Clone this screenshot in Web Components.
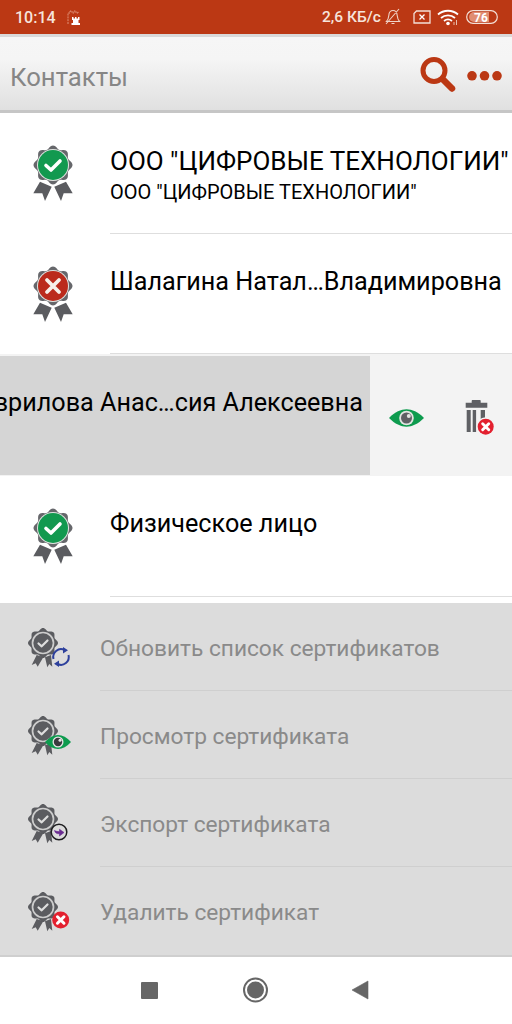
<!DOCTYPE html>
<html lang="ru">
<head>
<meta charset="utf-8">
<title>Контакты</title>
<style>
  html, body { margin: 0; padding: 0; background: #fff; }
  body { width: 512px; height: 1024px; overflow: hidden; font-family: Roboto, sans-serif; }
</style>
</head>
<body>
<status-bar></status-bar>
<app-toolbar>Контакты</app-toolbar>
<contact-list>
  <contact-row status="ok" subtitle='ООО "ЦИФРОВЫЕ ТЕХНОЛОГИИ"'>ООО "ЦИФРОВЫЕ ТЕХНОЛОГИИ"</contact-row>
  <contact-row status="bad">Шалагина Натал…Владимировна</contact-row>
  <swiped-row>Гаврилова Анас…сия Алексеевна</swiped-row>
  <contact-row status="ok">Физическое лицо</contact-row>
</contact-list>
<action-menu>
  <menu-item overlay="sync">Обновить список сертификатов</menu-item>
  <menu-item overlay="eye">Просмотр сертификата</menu-item>
  <menu-item overlay="export">Экспорт сертификата</menu-item>
  <menu-item overlay="delete" last>Удалить сертификат</menu-item>
</action-menu>
<nav-bar></nav-bar>

<script>
// scalloped edge of the certificate badge
function rosette (cx, cy, r) {
  let d = ''
  for (let i = 0; i < 120; i++) {
    const a = i / 120 * Math.PI * 2
    const rr = r * (0.92 + 0.08 * Math.cos(8 * a))
    const x = cx + rr * Math.sin(a)
    const y = cy - rr * Math.cos(a)
    d += (i ? 'L' : 'M') + x.toFixed(2) + ' ' + y.toFixed(2)
  }
  return d + 'Z'
}

const redCross = (cx, cy, r) => `
  <circle cx="${cx}" cy="${cy}" r="${r}" fill="#e3202f"/>
  <path d="M${cx - r * .38} ${cy - r * .38}L${cx + r * .38} ${cy + r * .38}M${cx + r * .38} ${cy - r * .38}L${cx - r * .38} ${cy + r * .38}" stroke="#fff" stroke-width="${r * .36}" stroke-linecap="round"/>`

const OVERLAYS = {
  sync: `
    <g fill="none" stroke="#2d409c" stroke-width="2">
      <path d="M35.500 37a7.800 7.800 0 0 1 11-9"/>
      <path d="M50.500 33a7.800 7.800 0 0 1-11 9"/>
    </g>
    <path d="M45 25l5 3.200-5 3.200zM41 38.600l-5 3.200 5 3.200z" fill="#2d409c"/>`,
  eye: `
    <path d="M27 32C31 27.500 35.500 25 40 25S49 27.500 53 32C49 36.500 44.500 39 40 39S31 36.500 27 32Z" fill="#0d9b4e"/>
    <circle cx="40" cy="32" r="5.500" fill="#e6e6e6"/>
    <circle cx="40" cy="32" r="4.200" fill="#3b3b3f"/>
    <circle cx="42" cy="30.300" r="1.500" fill="#e6e6e6"/>`,
  export: `
    <circle cx="41" cy="34" r="7.800" fill="#dcdcdc" stroke="#1d1d1f" stroke-width="1.500"/>
    <path d="M36.500 32.500c.5 2.500 2.500 3.500 5 3.200v2.300l4.500-3.500-4.500-3.200v2.200c-1.800.2-3.400-.1-5-1Z" fill="#6a2c91" stroke="#6a2c91" stroke-width=".6"/>`,
  delete: redCross(42.7, 34, 8.5)
}

class CertBadge extends HTMLElement {
  constructor () {
    super()
    this.shadow = this.attachShadow({ mode: 'open' })
  }

  connectedCallback () {
    this.render()
  }

  render () {
    const overlay = this.getAttribute('overlay')
    const status = this.getAttribute('status')
    if (overlay) {
      this.shadow.innerHTML = `
        <style>
          :host { display: block; width: 58px; height: 50px; }
          svg { display: block; }
        </style>
        <svg width="58" height="50" viewBox="0 0 58 50">
          <path d="M18.700 33L25.300 35.300L19.700 44.700L17.700 41.300L13.700 43Z M27 35.300L33 33L34.300 44.700L31.300 42L29.300 45.300Z" fill="#5b5c60"/>
          <path d="${rosette(25, 21, 15)}" fill="#5b5c60"/>
          <circle cx="25" cy="21" r="10.500" fill="none" stroke="#cdcdcd" stroke-width="1.700"/>
          <path d="M20.500 21.500L23.700 24.300L29.500 18.500" fill="none" stroke="#dedede" stroke-width="2.200" stroke-linecap="round" stroke-linejoin="round"/>
          ${OVERLAYS[overlay]}
        </svg>`
      return
    }
    const ok = status === 'ok'
    this.shadow.innerHTML = `
      <style>
        :host { display: block; width: 60px; height: 60px; }
        svg { display: block; }
      </style>
      <svg width="60" height="60" viewBox="0 0 60 60">
        <path d="M17 38.700L28.700 43.700L22 58L19.300 50.300L10.300 50.300Z M43 38.700L31.300 43.700L38 58L40.700 50.300L49.700 50.300Z" fill="#5b5c60"/>
        <path d="${rosette(30, 22, 19.5)}" fill="#66676b"/>
        <circle cx="30" cy="22" r="16" fill="#dfe3e0"/>
        <circle cx="30" cy="22" r="15" fill="${ok ? '#12994f' : '#bb2b1c'}"/>
        ${ok
          ? '<path d="M23 22.500L28 27L37 18" fill="none" stroke="#fff" stroke-width="3.600" stroke-linecap="round" stroke-linejoin="round"/>'
          : '<path d="M24 16L36 28M36 16L24 28" stroke="#f6efe9" stroke-width="3.800" stroke-linecap="round"/>'}
      </svg>`
  }
}

class StatusBar extends HTMLElement {
  constructor () {
    super()
    this.shadow = this.attachShadow({ mode: 'open' })
  }

  connectedCallback () {
    this.shadow.innerHTML = /*html*/`
      <style>
        :host {
          display: flex;
          align-items: center;
          height: 34px;
          padding: 0 14px 0 15px;
          background: #bb3814;
          color: #f6e4dc;
          font: 500 16px Roboto, sans-serif;
        }
        .time { width: 52px; }
        .net { margin-left: auto; font-size: 15.5px; width: 61px; }
        svg { display: block; flex: none; }
      </style>
      <span class="time">10:14</span>
      <svg width="14" height="15" viewBox="0 0 14 15">
        <path d="M1 14V3h2V1h2v2h2V1h2v2h2V1" fill="none" stroke="#e9a78f" stroke-width=".8" stroke-dasharray="2 .8"/>
        <path d="M5 7h1.500v1.500H8V7h1.500v1.500H11V7h1.500v3h-1v3H13v2H4.500v-2H6v-3H5z" fill="#fff"/>
      </svg>
      <span class="net">2,6 КБ/с</span>
      <svg width="18" height="18" viewBox="0 0 18 18" style="margin-left:1px">
        <path d="M2.500 13.500h13c-1.500-1.500-2-3-2.300-6C13 4.500 11.500 2.500 9 2.500S5 4.500 4.800 7.500c-.3 3-.8 4.500-2.300 6ZM7.500 15.500h3M2 16L15 1" fill="none" stroke="#efd3c8" stroke-width="1.100"/>
      </svg>
      <svg width="18" height="14" viewBox="0 0 18 14" style="margin-left:11px">
        <path d="M3.500 1H17v12H1V3.500Z" fill="none" stroke="#f3dfd6" stroke-width="1.300"/>
        <path d="M6.500 4.500l5 5M11.500 4.500l-5 5" stroke="#fff" stroke-width="1.300"/>
      </svg>
      <svg width="22" height="17" viewBox="0 0 22 17" style="margin-left:6px">
        <path d="M1 5.500C6.500 .5 15.500 .5 21 5.500M4 9c4-3.500 10-3.500 14 0M7 12c2.300-1.800 5.700-1.800 8 0" fill="none" stroke="#fff" stroke-width="1.800"/>
        <circle cx="11" cy="14.500" r="1.800" fill="#fff"/>
        <path d="M17 13v3M19.500 11v5" stroke="#e9bfae" stroke-width="1"/>
      </svg>
      <svg width="32" height="14" viewBox="0 0 32 14" style="margin-left:7px">
        <rect x=".7" y=".7" width="30.600" height="12.600" rx="6.300" fill="none" stroke="#f3dfd6" stroke-width="1.200"/>
        <path d="M8 2h15v10H8a5 5 0 0 1 0-10Z" fill="#e08d72"/>
        <text x="15" y="11.500" text-anchor="middle" font-family="Roboto, sans-serif" font-weight="700" font-size="12" fill="#fff">76</text>
      </svg>`
  }
}

class AppToolbar extends HTMLElement {
  constructor () {
    super()
    this.shadow = this.attachShadow({ mode: 'open' })
  }

  connectedCallback () {
    this.shadow.innerHTML = /*html*/`
      <style>
        :host {
          display: flex;
          align-items: center;
          box-sizing: border-box;
          height: 79px;
          padding: 0 10px;
          border-top: 3px solid #d9d9d9;
          border-bottom: 3px solid #c6c6c6;
          background: linear-gradient(#f6f6f6, #f5f5f5 30%, #e0e0e0);
          color: #868686;
          font: 400 25.7px Roboto, sans-serif;
        }
        .title { margin-top: 6px; }
        svg { margin-left: auto; display: block; }
      </style>
      <span class="title"><slot></slot></span>
      <svg width="92" height="40" viewBox="0 0 92 40">
        <circle cx="24" cy="16.500" r="11" fill="none" stroke="#bb3814" stroke-width="5"/>
        <path d="M32.500 25L42 34.500" stroke="#bb3814" stroke-width="6.500" stroke-linecap="round"/>
        <circle cx="62" cy="21.800" r="4.800" fill="#bb3814"/>
        <circle cx="74.500" cy="21.800" r="4.800" fill="#bb3814"/>
        <circle cx="87" cy="21.800" r="4.800" fill="#bb3814"/>
      </svg>`
  }
}

class ContactList extends HTMLElement {
  constructor () {
    super()
    this.shadow = this.attachShadow({ mode: 'open' })
    this.shadow.innerHTML = `
      <style>
        :host {
          display: flex;
          flex-direction: column;
          box-sizing: border-box;
          height: 490px;
          padding-bottom: 6px;
          background: #fff;
        }
      </style>
      <slot></slot>`
  }
}

class ContactRow extends HTMLElement {
  constructor () {
    super()
    this.shadow = this.attachShadow({ mode: 'open' })
  }

  connectedCallback () {
    const sub = this.getAttribute('subtitle')
    this.shadow.innerHTML = /*html*/`
      <style>
        :host {
          display: flex;
          flex: 1;
          min-height: 0;
          padding-left: 23px;
          color: #000;
          font-family: Roboto, sans-serif;
        }
        cert-badge { margin-top: 30px; margin-right: 27px; flex: none; }
        .body {
          flex: 1;
          min-width: 0;
          box-sizing: border-box;
          border-bottom: 1px solid #dedede;
          padding-top: 33px;
          white-space: nowrap;
        }
        .title { font-size: 25.2px; line-height: 30px; }
        :host([subtitle]) .title { font-size: 26px; }
        .sub { font-size: 20px; line-height: 24px; margin-top: 4px; }
      </style>
      <cert-badge status="${this.getAttribute('status')}"></cert-badge>
      <div class="body">
        <div class="title"><slot></slot></div>
        ${sub ? `<div class="sub">${sub}</div>` : ''}
      </div>`
  }
}

class SwipedRow extends HTMLElement {
  constructor () {
    super()
    this.shadow = this.attachShadow({ mode: 'open' })
  }

  connectedCallback () {
    this.shadow.innerHTML = /*html*/`
      <style>
        :host {
          display: flex;
          flex: none;
          height: 122px;
          background: #f3f3f3;
          font-family: Roboto, sans-serif;
        }
        .front {
          width: 370px;
          flex: none;
          box-sizing: border-box;
          height: 119px;
          margin-top: 2px;
          padding: 32px 7px 0 0;
          background: #d5d5d5;
          overflow: hidden;
          display: flex;
          justify-content: flex-end;
          white-space: nowrap;
          color: #000;
          font-size: 25.2px;
          line-height: 30px;
        }
        .text { flex: none; }
        svg { display: block; }
      </style>
      <div class="front"><span class="text"><slot></slot></span></div>
      <svg width="142" height="122" viewBox="0 0 142 122">
        <path d="M19 64C25 58 31 55.300 36.500 55.300S48 58 54 64C48 70 42 72.700 36.500 72.700S25 70 19 64Z" fill="#0d9b4e"/>
        <circle cx="36.500" cy="64" r="7.300" fill="#e2e6e2"/>
        <circle cx="36.500" cy="64" r="5.500" fill="#5f6064"/>
        <circle cx="38.800" cy="62" r="2" fill="#e2e6e2"/>
        <path d="M101.700 48.700V47c0-.6.400-1 1-1h7c.6 0 1 .4 1 1v1.700h6.600v5H95.700v-5Z" fill="#5f6064"/>
        <path d="M96.700 56h4v22h-4zM102.700 56h3.400v22h-3.400zM110.700 56h4.300v10h-4.300z" fill="#5f6064"/>
        <circle cx="115.700" cy="72.700" r="9.500" fill="#f3f3f3"/>
        ${redCross(115.7, 72.7, 8)}
      </svg>`
  }
}

class ActionMenu extends HTMLElement {
  constructor () {
    super()
    this.shadow = this.attachShadow({ mode: 'open' })
    this.shadow.innerHTML = `
      <style>
        :host { display: block; height: 352px; background: #dcdcdc; }
      </style>
      <slot></slot>`
  }
}

class MenuItem extends HTMLElement {
  constructor () {
    super()
    this.shadow = this.attachShadow({ mode: 'open' })
  }

  connectedCallback () {
    this.shadow.innerHTML = /*html*/`
      <style>
        :host {
          display: flex;
          align-items: stretch;
          height: 88px;
          padding-left: 18px;
          color: #8a8a8a;
          font: 400 22.7px Roboto, sans-serif;
        }
        cert-badge { align-self: center; margin-right: 24px; flex: none; }
        .label {
          flex: 1;
          display: flex;
          align-items: center;
          box-sizing: border-box;
          padding-top: 3px;
          border-bottom: 1px solid #cfcfcf;
        }
        :host([last]) .label { border-bottom: 0; }
      </style>
      <cert-badge overlay="${this.getAttribute('overlay')}"></cert-badge>
      <div class="label"><slot></slot></div>`
  }
}

class NavBar extends HTMLElement {
  constructor () {
    super()
    this.shadow = this.attachShadow({ mode: 'open' })
  }

  connectedCallback () {
    this.shadow.innerHTML = /*html*/`
      <style>
        :host {
          display: block;
          height: 69px;
          box-sizing: border-box;
          border-top: 2px solid #cfcfcf;
          background: #fff;
        }
        svg { display: block; }
      </style>
      <svg width="512" height="67" viewBox="0 0 512 67">
        <rect x="141" y="25" width="17" height="17" rx="1" fill="#666"/>
        <circle cx="255.500" cy="33" r="11.500" fill="none" stroke="#666" stroke-width="2"/>
        <circle cx="255.500" cy="33" r="8.500" fill="#666"/>
        <path d="M352 33L368 24V42Z" fill="#666" stroke="#666" stroke-width=".6" stroke-linejoin="round"/>
      </svg>`
  }
}

customElements.define('cert-badge', CertBadge)
customElements.define('status-bar', StatusBar)
customElements.define('app-toolbar', AppToolbar)
customElements.define('contact-list', ContactList)
customElements.define('contact-row', ContactRow)
customElements.define('swiped-row', SwipedRow)
customElements.define('action-menu', ActionMenu)
customElements.define('menu-item', MenuItem)
customElements.define('nav-bar', NavBar)
</script>
</body>
</html>
